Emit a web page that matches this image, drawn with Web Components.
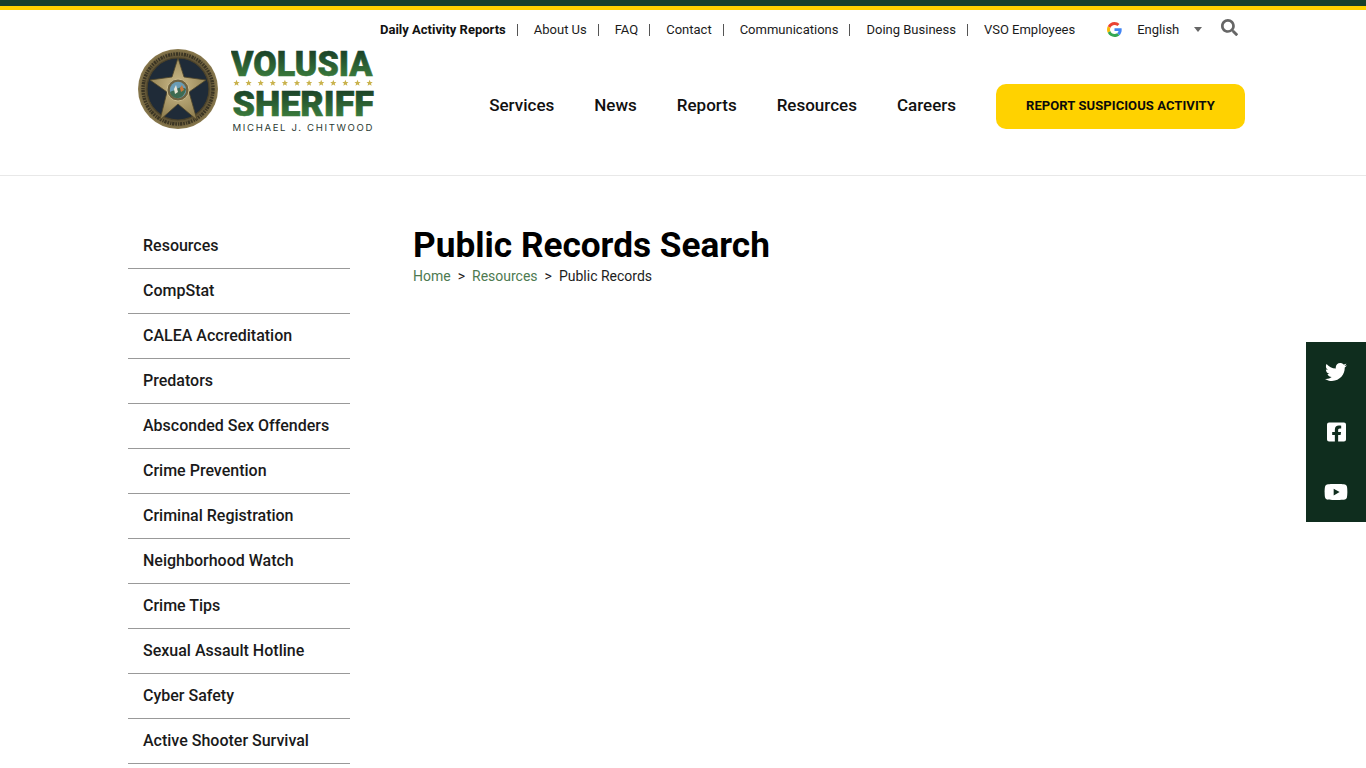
<!DOCTYPE html>
<html lang="en">
<head>
<meta charset="utf-8">
<title>Public Records Search</title>
<style>
    html, body {
        margin: 0;
        padding: 0;
        height: 768px;
        overflow: hidden;
        background: #fff;
        font-family: Roboto, "Liberation Sans", sans-serif;
    }
</style>
</head>
<body>
<site-header></site-header>
<page-body></page-body>
<social-rail></social-rail>

<script>
class SiteLogo extends HTMLElement {
    constructor() {
        super();
        this.shadowDOM = this.attachShadow({mode: "open"});
    }

    connectedCallback() {
        // row of twelve little stars between the two words
        const star = "M0-3.2L.9-1 3.1-1 1.4.4 2 2.7 0 1.4-2 2.7-1.4.4-3.1-1-.9-1z";
        let stars = "";
        for (let i = 0; i < 12; i++) {
            stars += `<path d="${star}" transform="translate(${5.5 + i * 12.1} 34)"/>`;
        }
        this.shadowDOM.innerHTML = `
            <style>
                :host {
                    display: flex;
                    align-items: flex-start;
                    gap: 13px;
                }
                svg { display: block; flex: none; }
                .mark { margin-top: -12px; }
                .word { font-family: Roboto, sans-serif; font-weight: 900; font-size: 34.5px; }
                .name { font-family: Inter, Roboto, sans-serif; font-weight: 400; font-size: 9.6px; }
            </style>
            <svg width="80" height="81" viewBox="0 0 80 81">
                <defs>
                    <radialGradient id="gold" cx="50%" cy="45%" r="60%">
                        <stop offset="0" stop-color="#cdbb8a"/>
                        <stop offset="1" stop-color="#8e7d4e"/>
                    </radialGradient>
                    <radialGradient id="rim" cx="50%" cy="50%" r="50%">
                        <stop offset="0.8" stop-color="#5f5335"/>
                        <stop offset="1" stop-color="#8a7a4e"/>
                    </radialGradient>
                </defs>
                <circle cx="40" cy="40" r="40" fill="url(#rim)"/>
                <circle cx="40" cy="40" r="35" fill="none" stroke="#3a3423" stroke-width="3.4" stroke-dasharray="1.6 1 2.2 .8 1.2 1.2"/>
                <circle cx="40" cy="40" r="31" fill="#1f2b38" stroke="#4a4129" stroke-width="1.2"/>
                <polygon points="40,9 46,28 68,31 51,43 59,71 40,55 22,71 29,43 12,31 34,28"
                    fill="url(#gold)" stroke="#4f4528" stroke-width="0.8"/>
                <circle cx="40" cy="41" r="11" fill="#6e6240" stroke="#cbbb8c" stroke-width="1"/>
                <circle cx="40" cy="41" r="8.2" fill="#6a9cb4"/>
                <path d="M32 43c3-2 5-1 7-3s6-2 9 0c-1 5-4 9-8 9s-7-2-8-6z" fill="#3e6a50"/>
                <path d="M44 36l2 5-3 2-1-4z" fill="#c9773a"/>
                <path d="M38 36l2 7-3 2-1-5z" fill="#ece7d6"/>
            </svg>
            <svg class="mark" width="144" height="98" viewBox="0 -12 144 98">
                <defs>
                    <linearGradient id="one" gradientUnits="userSpaceOnUse" x1="0" y1="3" x2="0" y2="28">
                        <stop offset="0" stop-color="#1c4429"/>
                        <stop offset="1" stop-color="#3a7a3c"/>
                    </linearGradient>
                    <linearGradient id="two" gradientUnits="userSpaceOnUse" x1="0" y1="42" x2="0" y2="67">
                        <stop offset="0" stop-color="#1c4429"/>
                        <stop offset="1" stop-color="#3a7a3c"/>
                    </linearGradient>
                </defs>
                <text class="word" x="0" y="27" fill="url(#one)" stroke="url(#one)" stroke-width=".6" textLength="141.5" lengthAdjust="spacingAndGlyphs">VOLUSIA</text>
                <g fill="#c9b24c">${stars}</g>
                <text class="word" x="1.5" y="66.5" fill="url(#two)" stroke="url(#two)" stroke-width=".6" textLength="141.5" lengthAdjust="spacingAndGlyphs">SHERIFF</text>
                <text class="name" x="1.5" y="81.5" fill="#2b3a33" textLength="140" lengthAdjust="spacing">MICHAEL J. CHITWOOD</text>
            </svg>
        `;
    }
}
customElements.define("site-logo", SiteLogo);

class TopLinks extends HTMLElement {
    constructor() {
        super();
        this.shadowDOM = this.attachShadow({mode: "open"});
    }

    connectedCallback() {
        const links = ["About Us", "FAQ", "Contact", "Communications", "Doing Business", "VSO Employees"];
        this.shadowDOM.innerHTML = `
            <style>
                :host {
                    display: flex;
                    align-items: center;
                    height: 38px;
                    font-size: 13px;
                    color: #1b1b1b;
                }
                .links { display: flex; align-items: center; margin-top: 1px; }
                .links a {
                    color: inherit;
                    text-decoration: none;
                    line-height: 12px;
                    padding-right: 11px;
                    margin-right: 16px;
                    border-right: 1px solid #555;
                    white-space: nowrap;
                }
                .links a.strong { font-weight: 700; color: #111; }
                .links a:last-child { border-right: none; padding-right: 0; margin-right: 0; }
                .lang {
                    display: flex;
                    align-items: center;
                    margin-left: 32px;
                }
                .lang span { margin-left: 15px; width: 57px; }
                .caret {
                    width: 0;
                    height: 0;
                    border: 4.5px solid transparent;
                    border-top: 5px solid #666;
                    border-bottom: none;
                }
                .search { display: block; margin-left: 19px; margin-top: -3px; }
            </style>
            <div class="links">
                <a class="strong" href="#">Daily Activity Reports</a>
                ${links.map(l => `<a href="#">${l}</a>`).join("")}
            </div>
            <div class="lang">
                <svg width="15" height="15" viewBox="0 0 48 48">
                    <path fill="#EA4335" d="M24 9.5c3.54 0 6.71 1.22 9.21 3.6l6.85-6.85C35.9 2.38 30.47 0 24 0 14.62 0 6.51 5.38 2.56 13.22l7.98 6.19C12.43 13.72 17.74 9.5 24 9.5z"/>
                    <path fill="#4285F4" d="M46.98 24.55c0-1.57-.15-3.09-.38-4.55H24v9.02h12.94c-.58 2.96-2.26 5.48-4.78 7.18l7.73 6c4.51-4.18 7.09-10.36 7.09-17.65z"/>
                    <path fill="#FBBC05" d="M10.53 28.59c-.48-1.45-.76-2.99-.76-4.59s.27-3.14.76-4.59l-7.98-6.19C.92 16.46 0 20.12 0 24c0 3.88.92 7.54 2.56 10.78l7.97-6.19z"/>
                    <path fill="#34A853" d="M24 48c6.48 0 11.93-2.13 15.89-5.81l-7.73-6c-2.15 1.45-4.92 2.3-8.16 2.3-6.26 0-11.57-4.22-13.47-9.91l-7.98 6.19C6.51 42.62 14.62 48 24 48z"/>
                </svg>
                <span>English</span>
                <div class="caret"></div>
            </div>
            <svg class="search" width="17" height="17" viewBox="0 0 512 512">
                <path fill="#666" d="M505 442.7L405.3 343c-4.5-4.5-10.6-7-17-7H372c27.6-35.3 44-79.7 44-128C416 93.1 322.9 0 208 0S0 93.1 0 208s93.1 208 208 208c48.3 0 92.7-16.4 128-44v16.3c0 6.4 2.5 12.5 7 17l99.7 99.7c9.4 9.4 24.6 9.4 33.9 0l28.3-28.3c9.4-9.4 9.4-24.6.1-34zM208 336c-70.7 0-128-57.2-128-128 0-70.7 57.2-128 128-128 70.7 0 128 57.2 128 128 0 70.7-57.2 128-128 128z"/>
            </svg>
        `;
    }
}
customElements.define("top-links", TopLinks);

class MainNav extends HTMLElement {
    constructor() {
        super();
        this.shadowDOM = this.attachShadow({mode: "open"});
    }

    connectedCallback() {
        const items = ["Services", "News", "Reports", "Resources", "Careers"];
        this.shadowDOM.innerHTML = `
            <style>
                :host {
                    display: flex;
                    align-items: center;
                    gap: 40px;
                    font-size: 17px;
                    font-weight: 500;
                    color: #111;
                }
                a { color: inherit; text-decoration: none; white-space: nowrap; padding-bottom: 3px; }
                .report {
                    display: block;
                    width: 249px;
                    height: 45px;
                    line-height: 44px;
                    padding: 0;
                    text-align: center;
                    border-radius: 10px;
                    background: #ffd200;
                    font-size: 13px;
                    font-weight: 700;
                    letter-spacing: 0.08px;
                    color: #0b0b0b;
                }
            </style>
            ${items.map(i => `<a href="#">${i}</a>`).join("")}
            <a class="report" href="#">REPORT SUSPICIOUS ACTIVITY</a>
        `;
    }
}
customElements.define("main-nav", MainNav);

class SiteHeader extends HTMLElement {
    constructor() {
        super();
        this.shadowDOM = this.attachShadow({mode: "open"});
    }

    connectedCallback() {
        this.shadowDOM.innerHTML = `
            <style>
                :host {
                    display: block;
                    height: 176px;
                    box-sizing: border-box;
                    border-top: 6px solid #17402c;
                    border-bottom: 1px solid #e8e8e8;
                }
                .yellow { height: 4px; background: #ffd200; }
                .top {
                    display: flex;
                    justify-content: flex-start;
                    padding-left: 380px;
                }
                .row {
                    display: flex;
                    justify-content: space-between;
                    align-items: flex-start;
                    padding: 0 121px 0 138px;
                    margin-top: 1px;
                }
                main-nav { margin-top: 35px; }
            </style>
            <div class="yellow"></div>
            <div class="top"><top-links></top-links></div>
            <div class="row">
                <site-logo></site-logo>
                <main-nav></main-nav>
            </div>
        `;
    }
}
customElements.define("site-header", SiteHeader);

class SideMenu extends HTMLElement {
    constructor() {
        super();
        this.shadowDOM = this.attachShadow({mode: "open"});
    }

    connectedCallback() {
        const items = ["Resources", "CompStat", "CALEA Accreditation", "Predators", "Absconded Sex Offenders",
            "Crime Prevention", "Criminal Registration", "Neighborhood Watch", "Crime Tips",
            "Sexual Assault Hotline", "Cyber Safety", "Active Shooter Survival"];
        this.shadowDOM.innerHTML = `
            <style>
                :host {
                    display: block;
                    width: 222px;
                    font-size: 16px;
                    font-weight: 500;
                    color: #1a1a1a;
                }
                a {
                    display: block;
                    height: 45px;
                    box-sizing: border-box;
                    line-height: 44px;
                    padding-left: 15px;
                    border-bottom: 1px solid #999;
                    color: inherit;
                    text-decoration: none;
                    white-space: nowrap;
                }
            </style>
            ${items.map(i => `<a href="#">${i}</a>`).join("")}
        `;
    }
}
customElements.define("side-menu", SideMenu);

class PageHead extends HTMLElement {
    constructor() {
        super();
        this.shadowDOM = this.attachShadow({mode: "open"});
    }

    connectedCallback() {
        this.shadowDOM.innerHTML = `
            <style>
                :host { display: block; }
                h1 {
                    margin: 0;
                    font-size: 35.2px;
                    font-weight: 700;
                    line-height: 44px;
                    color: #000;
                }
                .crumbs {
                    display: flex;
                    gap: 7px;
                    font-size: 14px;
                    line-height: 20px;
                    margin-top: -1px;
                    color: #1d1d1d;
                }
                .crumbs a { color: #4d7a50; text-decoration: none; }
            </style>
            <h1>Public Records Search</h1>
            <div class="crumbs">
                <a href="#">Home</a><span>&gt;</span><a href="#">Resources</a><span>&gt;</span><span>Public Records</span>
            </div>
        `;
    }
}
customElements.define("page-head", PageHead);

class PageBody extends HTMLElement {
    constructor() {
        super();
        this.shadowDOM = this.attachShadow({mode: "open"});
    }

    connectedCallback() {
        this.shadowDOM.innerHTML = `
            <style>
                :host {
                    display: flex;
                    align-items: flex-start;
                    gap: 63px;
                    padding: 48px 0 0 128px;
                }
                page-head { margin-top: -1px; }
            </style>
            <side-menu></side-menu>
            <page-head></page-head>
        `;
    }
}
customElements.define("page-body", PageBody);

class SocialRail extends HTMLElement {
    constructor() {
        super();
        this.shadowDOM = this.attachShadow({mode: "open"});
    }

    connectedCallback() {
        this.shadowDOM.innerHTML = `
            <style>
                :host {
                    position: fixed;
                    top: 342px;
                    right: 0;
                    width: 60px;
                    display: flex;
                    flex-direction: column;
                    background: #0f2d1e;
                }
                a {
                    height: 60px;
                    display: flex;
                    align-items: center;
                    justify-content: center;
                }
                svg { display: block; fill: #fff; }
            </style>
            <a href="#" aria-label="Twitter"><svg width="22" height="22" viewBox="0 0 512 512"><path d="M459.37 151.716c.325 4.548.325 9.097.325 13.645 0 138.72-105.583 298.558-298.558 298.558-59.452 0-114.68-17.219-161.137-47.106 8.447.974 16.568 1.299 25.34 1.299 49.055 0 94.213-16.568 130.274-44.832-46.132-.975-84.792-31.188-98.112-72.772 6.498.974 12.995 1.624 19.818 1.624 9.421 0 18.843-1.3 27.614-3.573-48.081-9.747-84.143-51.98-84.143-102.985v-1.299c13.969 7.797 30.214 12.67 47.431 13.319-28.264-18.843-46.781-51.005-46.781-87.391 0-19.492 5.197-37.36 14.294-52.954 51.655 63.675 129.3 105.258 216.365 109.807-1.624-7.797-2.599-15.918-2.599-24.04 0-57.828 46.782-104.934 104.934-104.934 30.213 0 57.502 12.67 76.67 33.137 23.715-4.548 46.456-13.32 66.599-25.34-7.798 24.366-24.366 44.833-46.132 57.827 21.117-2.273 41.584-8.122 60.426-16.243-14.292 20.791-32.161 39.308-52.628 54.253z"/></svg></a>
            <a href="#" aria-label="Facebook"><svg width="19" height="22" viewBox="0 0 448 512"><path d="M400 32H48A48 48 0 0 0 0 80v352a48 48 0 0 0 48 48h137.25V327.69h-63V256h63v-54.64c0-62.15 37-96.48 93.67-96.48 27.14 0 55.52 4.84 55.52 4.84v61h-31.27c-30.81 0-40.42 19.12-40.42 38.73V256h68.78l-11 71.69h-57.78V480H400a48 48 0 0 0 48-48V80a48 48 0 0 0-48-48z"/></svg></a>
            <a href="#" aria-label="YouTube"><svg width="24" height="22" viewBox="0 0 576 512"><path d="M549.655 124.083c-6.281-23.65-24.787-42.276-48.284-48.597C458.781 64 288 64 288 64S117.22 64 74.629 75.486c-23.497 6.322-42.003 24.947-48.284 48.597-11.412 42.867-11.412 132.305-11.412 132.305s0 89.438 11.412 132.305c6.281 23.65 24.787 41.5 48.284 47.821C117.22 448 288 448 288 448s170.78 0 213.371-11.486c23.497-6.321 42.003-24.171 48.284-47.821 11.412-42.867 11.412-132.305 11.412-132.305s0-89.438-11.412-132.305zm-317.51 213.508V175.185l142.739 81.205-142.739 81.201z"/></svg></a>
        `;
    }
}
customElements.define("social-rail", SocialRail);
</script>
</body>
</html>
